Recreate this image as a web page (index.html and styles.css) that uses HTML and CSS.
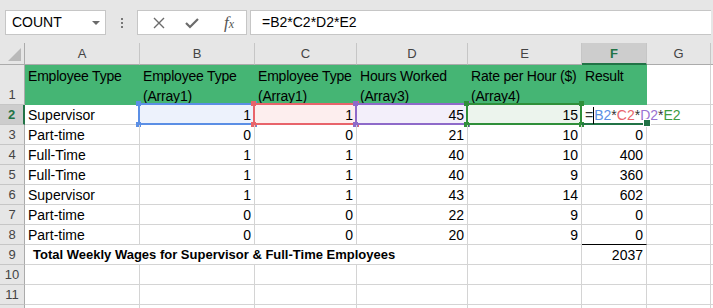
FILE: index.html
```html
<!DOCTYPE html>
<html lang="en">
<head>
    <meta charset="UTF-8">
    <link rel="stylesheet" href="styles.css">
    <title>Weekly Wages</title>
</head>
<body>
    <div class="toolbar">
        <div class="name-box">COUNT<span class="caret"></span></div>
        <div class="grip"><i></i><i></i><i></i></div>
        <div class="fx-buttons">
            <svg width="12" height="12" viewBox="0 0 12 12"><path d="M1 1 L11 11 M11 1 L1 11" stroke="#6b6b6b" stroke-width="1.4" fill="none"/></svg>
            <svg width="14" height="12" viewBox="0 0 14 12"><path d="M1 6 L5 10 L13 2" stroke="#6b6b6b" stroke-width="2.2" fill="none"/></svg>
            <span class="fx"><i>f</i><small>x</small></span>
        </div>
        <div class="formula">=B2*C2*D2*E2</div>
    </div>

    <div class="sheet">
        <!-- column headers -->
        <div class="corner"></div>
        <div class="colhdr">A</div>
        <div class="colhdr">B</div>
        <div class="colhdr">C</div>
        <div class="colhdr">D</div>
        <div class="colhdr">E</div>
        <div class="colhdr active">F</div>
        <div class="colhdr">G</div>
        <div class="colhdr last"></div>

        <!-- row 1 -->
        <div class="rowhdr bottom">1</div>
        <div class="cell head">Employee Type</div>
        <div class="cell head">Employee Type<br>(Array1)</div>
        <div class="cell head">Employee Type<br>(Array1)</div>
        <div class="cell head">Hours Worked<br>(Array3)</div>
        <div class="cell head">Rate per Hour ($)<br>(Array4)</div>
        <div class="cell head">Result</div>
        <div class="cell"></div>
        <div class="cell"></div>

        <!-- row 2 -->
        <div class="rowhdr active">2</div>
        <div class="cell">Supervisor</div>
        <div class="cell num ref-blue">1<span class="ref"><b></b><b></b><b></b><b></b></span></div>
        <div class="cell num ref-red">1<span class="ref"><b></b><b></b><b></b><b></b></span></div>
        <div class="cell num ref-purple">45<span class="ref"><b></b><b></b><b></b><b></b></span></div>
        <div class="cell num ref-green">15<span class="ref"><b></b><b></b><b></b><b></b></span></div>
        <div class="cell editing"><span class="edit">=<span class="cursor"></span><span class="c-blue">B2</span>*<span class="c-red">C2</span>*<span class="c-purple">D2</span>*<span class="c-green">E2</span></span><span class="handle"></span></div>
        <div class="cell"></div>
        <div class="cell"></div>

        <div class="rowhdr">3</div>
        <div class="cell">Part-time</div>
        <div class="cell num">0</div>
        <div class="cell num">0</div>
        <div class="cell num">21</div>
        <div class="cell num">10</div>
        <div class="cell num">0</div>
        <div class="cell"></div>
        <div class="cell"></div>

        <div class="rowhdr">4</div>
        <div class="cell">Full-Time</div>
        <div class="cell num">1</div>
        <div class="cell num">1</div>
        <div class="cell num">40</div>
        <div class="cell num">10</div>
        <div class="cell num">400</div>
        <div class="cell"></div>
        <div class="cell"></div>

        <div class="rowhdr">5</div>
        <div class="cell">Full-Time</div>
        <div class="cell num">1</div>
        <div class="cell num">1</div>
        <div class="cell num">40</div>
        <div class="cell num">9</div>
        <div class="cell num">360</div>
        <div class="cell"></div>
        <div class="cell"></div>

        <div class="rowhdr">6</div>
        <div class="cell">Supervisor</div>
        <div class="cell num">1</div>
        <div class="cell num">1</div>
        <div class="cell num">43</div>
        <div class="cell num">14</div>
        <div class="cell num">602</div>
        <div class="cell"></div>
        <div class="cell"></div>

        <div class="rowhdr">7</div>
        <div class="cell">Part-time</div>
        <div class="cell num">0</div>
        <div class="cell num">0</div>
        <div class="cell num">22</div>
        <div class="cell num">9</div>
        <div class="cell num">0</div>
        <div class="cell"></div>
        <div class="cell"></div>

        <div class="rowhdr">8</div>
        <div class="cell">Part-time</div>
        <div class="cell num">0</div>
        <div class="cell num">0</div>
        <div class="cell num">20</div>
        <div class="cell num">9</div>
        <div class="cell num total-line">0</div>
        <div class="cell"></div>
        <div class="cell"></div>

        <div class="rowhdr">9</div>
        <div class="cell spill"><strong>Total Weekly Wages for Supervisor &amp; Full-Time Employees</strong></div>
        <div class="cell open"></div>
        <div class="cell open"></div>
        <div class="cell"></div>
        <div class="cell"></div>
        <div class="cell num">2037</div>
        <div class="cell"></div>
        <div class="cell"></div>

        <div class="rowhdr">10</div>
        <div class="cell"></div>
        <div class="cell"></div>
        <div class="cell"></div>
        <div class="cell"></div>
        <div class="cell"></div>
        <div class="cell"></div>
        <div class="cell"></div>
        <div class="cell"></div>

        <div class="rowhdr">11</div>
        <div class="cell"></div>
        <div class="cell"></div>
        <div class="cell"></div>
        <div class="cell"></div>
        <div class="cell"></div>
        <div class="cell"></div>
        <div class="cell"></div>
        <div class="cell"></div>

        <!-- row 12, only its top edge is in view -->
        <div class="rowhdr"></div>
        <div class="cell"></div>
        <div class="cell"></div>
        <div class="cell"></div>
        <div class="cell"></div>
        <div class="cell"></div>
        <div class="cell"></div>
        <div class="cell"></div>
        <div class="cell"></div>
    </div>
</body>
</html>
```

FILE: styles.css
```css
body {
    margin: 0;
    font-family: "Liberation Sans", Arial, sans-serif;
    font-size: 14px;
    color: #000;
    background: #fff;
    overflow: hidden;
}

/* formula bar */
.toolbar {
    display: flex;
    align-items: flex-start;
    height: 43px;
    padding: 10px 0 0 5px;
    box-sizing: border-box;
    background: #e6e6e6;
}

.name-box {
    position: relative;
    width: 101px;
    height: 25px;
    box-sizing: border-box;
    border: 1px solid #c6c6c6;
    background: #fff;
    padding-left: 6px;
    line-height: 23px;
    font-size: 14px;
}

.caret {
    position: absolute;
    right: 5px;
    top: 10px;
    border-left: 4px solid transparent;
    border-right: 4px solid transparent;
    border-top: 4px solid #6a6a6a;
}

.grip {
    width: 31px;
    height: 25px;
    display: flex;
    flex-direction: column;
    align-items: center;
    justify-content: center;
    gap: 2px;
}

.grip i {
    width: 2px;
    height: 2px;
    background: #777;
}

.fx-buttons {
    width: 110px;
    height: 25px;
    box-sizing: border-box;
    border: 1px solid #c6c6c6;
    background: #fff;
    display: flex;
    align-items: center;
    padding-left: 15px;
    gap: 20px;
}

.fx {
    font-family: "Liberation Serif", serif;
    color: #555;
    font-size: 17px;
    margin-left: 5px;
}

.fx small {
    font-style: italic;
    font-size: 12px;
}

.formula {
    flex: 1;
    height: 25px;
    margin-left: 3px;
    margin-right: 2px;
    box-sizing: border-box;
    border: 1px solid #c6c6c6;
    border-right: none;
    background: #fff;
    padding-left: 11px;
    line-height: 23px;
}

/* sheet grid */
.sheet {
    display: grid;
    grid-template-columns: 25px 115px 115px 102px 111px 114px 65px 64px 1fr;
    grid-template-rows: 22px 40px repeat(11, 20px);
}

.corner {
    position: relative;
    background: #e6e6e6;
    border-right: 1px solid #ababab;
    border-bottom: 1px solid #ababab;
}

.corner::after {
    content: "";
    position: absolute;
    right: 3px;
    bottom: 3px;
    border-left: 13px solid transparent;
    border-bottom: 13px solid #b9b9b9;
}

.colhdr {
    background: #e6e6e6;
    border-right: 1px solid #c6c6c6;
    border-bottom: 1px solid #ababab;
    color: #444;
    font-size: 13px;
    text-align: center;
    line-height: 22px;
}

.colhdr.active {
    background: #cdcdcd;
    color: #217346;
    font-weight: bold;
    border-bottom: 2px solid #217346;
}

.colhdr.last {
    border-right: none;
}

.rowhdr {
    background: #e6e6e6;
    border-right: 1px solid #ababab;
    border-bottom: 1px solid #c6c6c6;
    color: #444;
    font-size: 13px;
    text-align: center;
    line-height: 20px;
}

.rowhdr.bottom {
    padding-top: 20px;
}

.rowhdr.active {
    background: #cdcdcd;
    color: #217346;
    font-weight: bold;
    border-right: 2px solid #217346;
}

.cell {
    position: relative;
    border-right: 1px solid #d4d4d4;
    border-bottom: 1px solid #d4d4d4;
    padding: 1px 3px 0;
    line-height: 18px;
    white-space: nowrap;
    box-sizing: border-box;
}

.cell.head {
    background: #45b574;
    border-color: #45b574;
    line-height: 20px;
    padding-top: 1px;
    letter-spacing: -0.2px;
}

.cell.num {
    text-align: right;
}

.cell.total-line {
    border-bottom-color: #000;
}

.cell.spill {
    border-right: none;
    padding-left: 8px;
    font-size: 13px;
    z-index: 1;
}

.cell.open {
    border-right: none;
}

/* range references of the formula being edited */
.ref {
    position: absolute;
    left: -2px;
    top: -2px;
    right: -1px;
    bottom: -1px;
    border: 2px solid;
    pointer-events: none;
}

.ref b {
    position: absolute;
    width: 5px;
    height: 5px;
    background: currentColor;
}

.ref b:nth-child(1) { left: -4px; top: -4px; }
.ref b:nth-child(2) { right: -4px; top: -4px; }
.ref b:nth-child(3) { left: -4px; bottom: -4px; }
.ref b:nth-child(4) { right: -4px; bottom: -4px; }

.ref-blue { background: #edf2fc; }
.ref-blue .ref { color: #5b8fe5; border-color: #5b8fe5; }
.ref-red { background: #fdeeee; }
.ref-red .ref { color: #e8646b; border-color: #e8646b; }
.ref-purple { background: #f3effa; }
.ref-purple .ref { color: #8e6ac9; border-color: #8e6ac9; }
.ref-green { background: #ecf4ed; }
.ref-green .ref { color: #2f8f3a; border-color: #2f8f3a; }

.cell.editing {
    border-right: none;
    border-bottom: 2px solid #217346;
    z-index: 2;
    padding-left: 3px;
}

.edit {
    position: relative;
    color: #333;
    background: #fff;
    padding-right: 4px;
}

.cursor {
    display: inline-block;
    width: 1px;
    height: 17px;
    background: #000;
    vertical-align: -4px;
}

.c-blue { color: #5b8fe5; }
.c-red { color: #e8646b; }
.c-purple { color: #9a72d2; }
.c-green { color: #3c9a3f; }

.handle {
    position: absolute;
    right: -4px;
    bottom: -4px;
    width: 6px;
    height: 6px;
    background: #217346;
    border: 1px solid #fff;
}
```
